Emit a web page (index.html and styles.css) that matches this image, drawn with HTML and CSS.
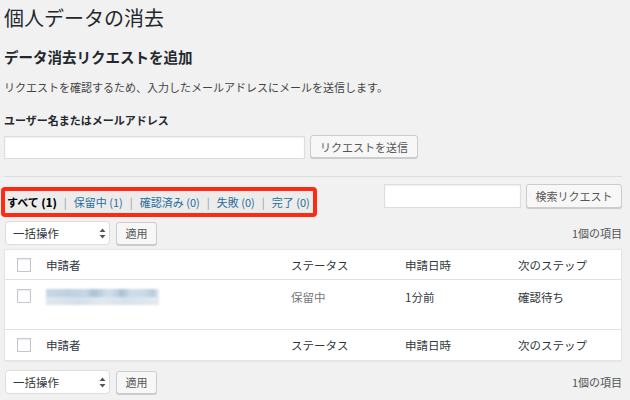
FILE: index.html
```html
<!DOCTYPE html>
<html lang="ja">
<head>
<meta charset="utf-8">
<link rel="stylesheet" href="styles.css">
</head>
<body>
<div class="wrap">
  <h1 class="title">個人データの消去</h1>
  <h2 class="subtitle">データ消去リクエストを追加</h2>
  <p class="desc">リクエストを確認するため、入力したメールアドレスにメールを送信します。</p>
  <div class="label">ユーザー名またはメールアドレス</div>
  <div class="add-row">
    <div class="input wide"></div>
    <div class="btn send">リクエストを送信</div>
  </div>
  <div class="sep"></div>
  <div class="toolbar">
    <div class="filters">
      <span class="cur">すべて <b>(1)</b></span><span class="bar">|</span><a>保留中 (1)</a><span class="bar">|</span><a>確認済み (0)</a><span class="bar">|</span><a>失敗 (0)</a><span class="bar">|</span><a>完了 (0)</a>
    </div>
    <div class="search">
      <div class="input sbox"></div>
      <div class="btn sbtn">検索リクエスト</div>
    </div>
  </div>
  <div class="bulk">
    <div class="select">一括操作<span class="arr"><svg width="7" height="11" viewBox="0 0 7 11"><path d="M3.5 0.5L6.5 4H0.5Z M3.5 10.5L6.5 7H0.5Z" fill="#555"/></svg></span></div>
    <div class="btn apply">適用</div>
    <div class="count">1個の項目</div>
  </div>
  <div class="table">
    <div class="row head">
      <div class="c-cb"><span class="cb"></span></div>
      <div class="c-name">申請者</div>
      <div class="c-status">ステータス</div>
      <div class="c-date">申請日時</div>
      <div class="c-next">次のステップ</div>
    </div>
    <div class="row body">
      <div class="c-cb"><span class="cb"></span></div>
      <div class="c-name"><div class="blur"><span class="b1"></span><span class="b2"></span></div></div>
      <div class="c-status muted">保留中</div>
      <div class="c-date">1分前</div>
      <div class="c-next">確認待ち</div>
    </div>
    <div class="row foot">
      <div class="c-cb"><span class="cb"></span></div>
      <div class="c-name">申請者</div>
      <div class="c-status">ステータス</div>
      <div class="c-date">申請日時</div>
      <div class="c-next">次のステップ</div>
    </div>
  </div>
  <div class="bulk bottom">
    <div class="select">一括操作<span class="arr"><svg width="7" height="11" viewBox="0 0 7 11"><path d="M3.5 0.5L6.5 4H0.5Z M3.5 10.5L6.5 7H0.5Z" fill="#555"/></svg></span></div>
    <div class="btn apply">適用</div>
    <div class="count">1個の項目</div>
  </div>
</div>
</body>
</html>
```

FILE: styles.css
```css
html, body {
  margin: 0;
  padding: 0;
  background: #f1f1f1;
}
body {
  font-family: "Noto Sans CJK JP", "Noto Sans", sans-serif;
  color: #444;
  width: 630px;
  height: 400px;
  overflow: hidden;
}
.wrap {
  padding: 0 8px 0 4px;
}
.title {
  margin: 6px 0 0;
  font-size: 20px;
  line-height: 24px;
  font-weight: 400;
  color: #23282d;
}
.subtitle {
  margin: 17px 0 0;
  font-size: 14.5px;
  line-height: 20px;
  font-weight: 700;
  color: #23282d;
}
.desc {
  margin: 12px 0 0;
  font-size: 11px;
  line-height: 16px;
  color: #444;
}
.label {
  margin-top: 17px;
  font-size: 11px;
  line-height: 16px;
  font-weight: 700;
  color: #23282d;
}
.add-row {
  margin-top: 8px;
  display: flex;
  align-items: flex-start;
  gap: 5px;
}
.input {
  background: #fff;
  border: 1px solid #ddd;
  box-shadow: inset 0 1px 2px rgba(0,0,0,0.07);
  box-sizing: border-box;
}
.wide {
  width: 301px;
  height: 23px;
}
.btn {
  box-sizing: border-box;
  background: #f7f7f7;
  border: 1px solid #ccc;
  border-radius: 3px;
  box-shadow: 0 1px 0 #ccc;
  color: #555;
  font-size: 11px;
  display: flex;
  align-items: center;
  justify-content: center;
}
.send {
  margin-top: -1px;
  width: 108px;
  height: 23px;
}
.sep {
  margin-top: 17px;
  height: 1px;
  background: #ddd;
}
.toolbar {
  display: flex;
  justify-content: space-between;
  align-items: flex-start;
  margin-top: 7px;
}
.filters {
  margin-top: 3px;
  margin-left: -3px;
  width: 316px;
  height: 30px;
  box-sizing: border-box;
  border: 4px solid #ff2a12;
  border-radius: 4px;
  background: #ececec;
  display: flex;
  align-items: center;
  padding-left: 2px;
  font-size: 11px;
  white-space: nowrap;
}
.filters .cur {
  color: #000;
  font-weight: 700;
}
.filters a {
  color: #2a6d9a;
}
.filters .bar {
  color: #999;
  margin: 0 7px;
}
.search {
  display: flex;
  gap: 5px;
}
.sbox {
  width: 137px;
  height: 24px;
}
.sbtn {
  width: 96px;
  height: 24px;
}
.bulk {
  margin-top: 4px;
  display: flex;
  align-items: center;
}
.select {
  box-sizing: border-box;
  margin-left: 1px;
  width: 105px;
  height: 24px;
  background: #fff;
  border: 1px solid #ddd;
  border-radius: 4px;
  font-size: 11.5px;
  color: #32373c;
  display: flex;
  align-items: center;
  padding-left: 7px;
  position: relative;
}
.arr {
  position: absolute;
  right: 3px;
  top: 6px;
  line-height: 0;
}
.apply {
  margin-left: 6px;
  width: 41px;
  height: 23px;
}
.count {
  margin-left: auto;
  font-size: 11px;
  color: #555;
}
.table {
  margin-top: 4px;
  background: #fff;
  border: 1px solid #e5e5e5;
  box-shadow: 0 1px 1px rgba(0,0,0,0.04);
}
.row {
  display: flex;
  font-size: 11.5px;
  color: #32373c;
}
.row.head {
  height: 29px;
  align-items: center;
  border-bottom: 1px solid #e1e1e1;
}
.row.body {
  height: 49px;
  align-items: flex-start;
  padding-top: 0;
  border-bottom: 1px solid #e1e1e1;
}
.row.foot {
  height: 30px;
  align-items: center;
}
.row.body > div {
  margin-top: 9px;
}
.c-cb {
  width: 41px;
  padding-left: 12px;
  box-sizing: border-box;
  display: flex;
  align-items: center;
}
.cb {
  display: block;
  width: 14px;
  height: 14px;
  box-sizing: border-box;
  border: 1px solid #c5c9cd;
  background: #fff;
  box-shadow: inset 0 1px 2px rgba(0,0,0,0.08);
}
.c-name { width: 245px; }
.c-status { width: 114px; }
.c-date { width: 113px; }
.c-next { flex: 1; }
.muted { color: #777; }
.blur {
  width: 113px;
  height: 16px;
  filter: blur(1.2px);
  display: flex;
  flex-direction: column;
}
.blur span {
  display: block;
  flex: 1;
}
.b1 {
  background: linear-gradient(90deg, #c9d8e4 0%, #bcd0de 20%, #c7d7e3 35%, #a9c2d4 42%, #d4e0e9 55%, #c3d5e2 62%, #a8c1d3 67%, #d0dde7 75%, #c9d9e5 88%, #b6cbdb 95%, #e4ecf2 100%);
}
.b2 {
  background: linear-gradient(90deg, #dde7ef 0%, #d3e0ea 30%, #e1e9f0 50%, #d6e2eb 70%, #e2eaf1 100%);
}
.bottom {
  margin-top: 9px;
}
```
